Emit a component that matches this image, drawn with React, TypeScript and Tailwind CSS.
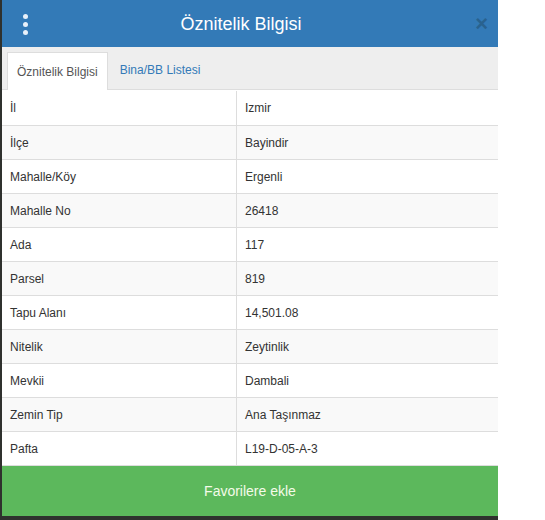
import React from "react";

const rows: [string, string][] = [
  ["İl", "Izmir"],
  ["İlçe", "Bayindir"],
  ["Mahalle/Köy", "Ergenli"],
  ["Mahalle No", "26418"],
  ["Ada", "117"],
  ["Parsel", "819"],
  ["Tapu Alanı", "14,501.08"],
  ["Nitelik", "Zeytinlik"],
  ["Mevkii", "Dambali"],
  ["Zemin Tip", "Ana Taşınmaz"],
  ["Pafta", "L19-D-05-A-3"],
];

export default function App() {
  return (
    <div className="flex h-[520px] w-[545px] bg-white" style={{ fontFamily: '"Liberation Sans", Arial, sans-serif' }}>
      <div className="flex w-[498px] flex-col bg-[#2f312e] pb-[4px] pl-[2px]">
        {/* header */}
        <div className="relative flex h-[47px] items-center justify-center bg-[#337ab7] pr-[18px]">
          <div className="absolute left-[21px] top-[14px] flex flex-col gap-[3px]">
            <span className="h-[5px] w-[5px] rounded-full bg-[#e8f1fa]" />
            <span className="h-[5px] w-[5px] rounded-full bg-[#e8f1fa]" />
            <span className="h-[5px] w-[5px] rounded-full bg-[#e8f1fa]" />
          </div>
          <h1 className="text-[18px] leading-none text-white">Öznitelik Bilgisi</h1>
          <span className="absolute right-[10px] top-[13px] text-[22px] font-bold leading-none text-[#29628f]">×</span>
        </div>

        {/* tabs */}
        <div className="flex h-[43px] items-end border-b border-[#ddd] bg-[#eee] pl-[5px]">
          <div className="-mb-px flex h-[38px] items-center border border-b-0 border-[#ddd] bg-white px-[9px] text-[12px] text-[#555]">
            Öznitelik Bilgisi
          </div>
          <div className="flex h-[38px] items-center px-[12px] text-[12px] text-[#337ab7]">Bina/BB Listesi</div>
        </div>

        {/* table */}
        <div className="flex flex-col bg-white pt-px">
          {rows.map(([k, v], i) => (
            <div
              key={k}
              className={`flex h-[34px] text-[12px] text-[#333] ${i > 0 ? "border-t border-[#ddd]" : ""} ${i % 2 === 1 ? "bg-[#f9f9f9]" : "bg-white"}`}
            >
              <div className="flex w-[235px] items-center border-r border-[#ddd] pl-[8px]">{k}</div>
              <div className="flex flex-1 items-center pl-[8px]">{v}</div>
            </div>
          ))}
        </div>

        {/* button */}
        <button className="flex h-[51px] items-center justify-center border-t border-[#ddd] bg-[#5cb85c] text-[14px] text-[#f4fbe9]">
          Favorilere ekle
        </button>
      </div>
    </div>
  );
}
